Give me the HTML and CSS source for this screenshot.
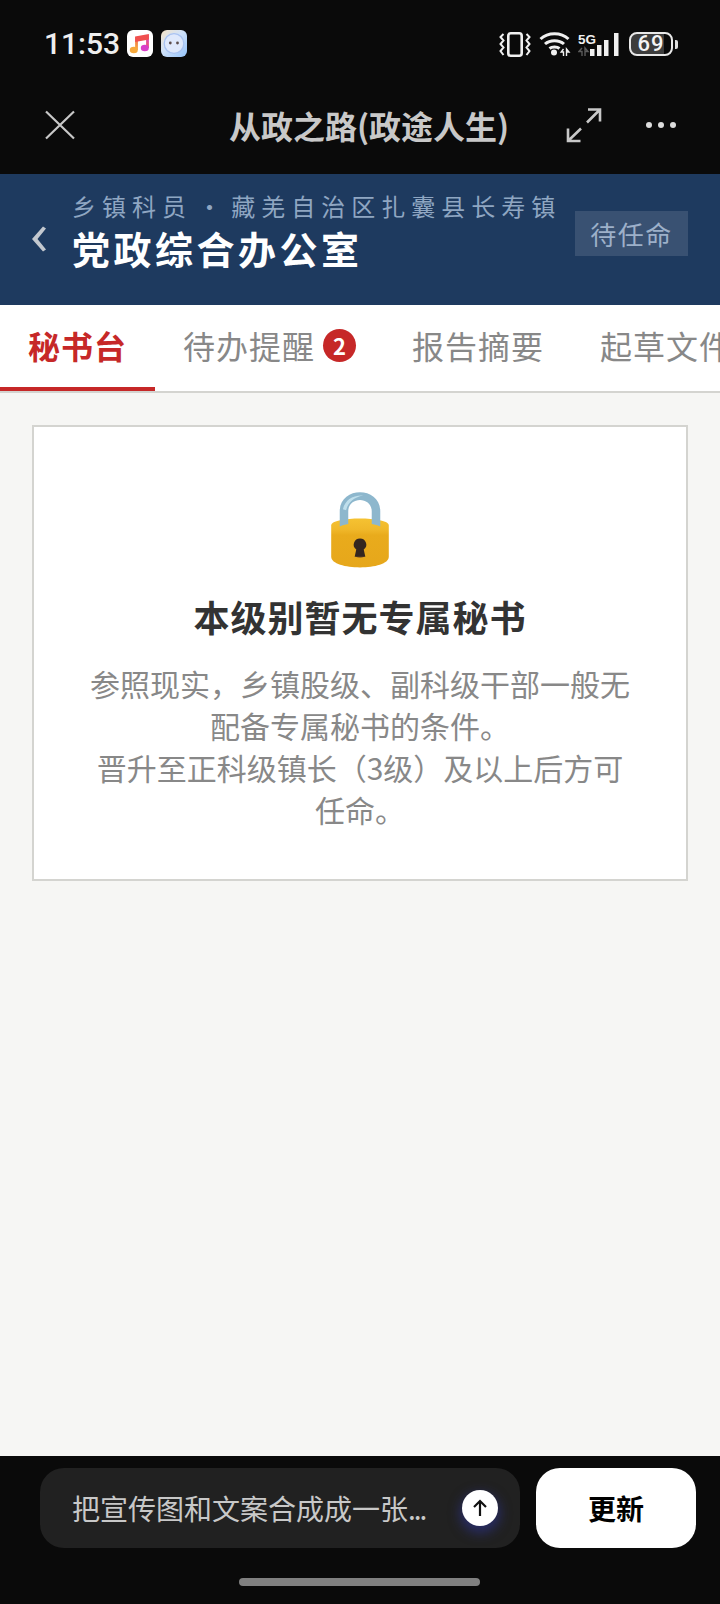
FILE: index.html
```html
<!DOCTYPE html>
<html lang="zh-CN">
<head>
<meta charset="utf-8">
<title>从政之路</title>
<link rel="stylesheet" href="styles.css">
</head>
<body>
<div class="page">
  <div class="statusbar">
    <div class="status-left">
      <span class="clock">11:53</span>
      <svg class="app-icon" width="26" height="27" viewBox="0 0 26 27">
        <defs>
          <linearGradient id="noteGrad" x1="0" y1="1" x2="1" y2="0">
            <stop offset="0" stop-color="#f7b03a"/><stop offset=".5" stop-color="#f0604f"/><stop offset="1" stop-color="#d93fc8"/>
          </linearGradient>
        </defs>
        <rect width="26" height="27" rx="6" fill="#fff"/>
        <path d="M9.500 20V8.500L20.500 6.500V18" fill="none" stroke="url(#noteGrad)" stroke-width="2.800"/>
        <path d="M8.100 6.500L21.900 4V9.500L8.100 12Z" fill="#f0504f"/>
        <ellipse cx="6.800" cy="20" rx="4" ry="3.300" fill="#f6a93b"/>
        <ellipse cx="17.800" cy="18" rx="4" ry="3.300" fill="#d93fc8"/>
      </svg>
      <svg class="app-icon" width="26" height="27" viewBox="0 0 26 27">
        <defs>
          <linearGradient id="botGrad" x1="0" y1="0" x2="1" y2="1">
            <stop offset="0" stop-color="#f6e4c6"/><stop offset=".45" stop-color="#cfe2fb"/><stop offset="1" stop-color="#95c4fb"/>
          </linearGradient>
        </defs>
        <rect width="26" height="27" rx="6" fill="url(#botGrad)"/>
        <circle cx="13" cy="13.500" r="9.800" fill="#dfe9fc" stroke="#a9c3f2" stroke-width="1.300"/>
        <circle cx="9.300" cy="13" r="1.400" fill="#5c4d4c"/>
        <circle cx="16.500" cy="13" r="1.400" fill="#5c4d4c"/>
      </svg>
    </div>
    <div class="status-right">
      <svg class="vibrate" width="32" height="25" viewBox="0 0 32 25" fill="none" stroke="#f0f0f0" stroke-width="2.600">
        <rect x="9.300" y="1.300" width="13.400" height="22.400" rx="2.500"/>
        <path d="M4.500 2L1.500 5L4.500 8.500L1.500 12L4.500 15.500L1.500 19L4.500 23M27.500 2L30.500 5L27.500 8.500L30.500 12L27.500 15.500L30.500 19L27.500 23" stroke-width="2"/>
      </svg>
      <svg class="wifi" width="32" height="25" viewBox="0 0 32 25" fill="none" stroke="#f0f0f0" stroke-width="3">
        <path d="M1.500 7C9 0 22 0 29.500 7M6 12C11 7.500 20 7.500 25 12M10.500 16.500C13 14.500 18 14.500 20.500 16.500"/>
        <circle cx="15" cy="20.500" r="3" fill="#f0f0f0" stroke="none"/>
        <path d="M24.500 17L22.200 20H24.500V24M27.500 24V17L30 20H27.500" stroke-width="1.400"/>
      </svg>
      <svg class="signal" width="42" height="25" viewBox="0 0 42 25">
        <text class="five-g" x="0" y="12">5G</text>
        <path d="M4 16L1 19.500H4V24M7 24V16L10 19.500H7" fill="none" stroke="#5a5a5a" stroke-width="1.400"/>
        <rect x="12" y="17" width="4.500" height="7" fill="#f0f0f0"/>
        <rect x="19" y="13" width="4.500" height="11" fill="#f0f0f0"/>
        <rect x="26" y="8" width="4.500" height="16" fill="#f0f0f0"/>
        <rect x="36" y="1" width="4.500" height="23" fill="#f0f0f0"/>
      </svg>
      <div class="battery">
        <div class="battery-body">69</div>
        <div class="battery-tip"></div>
      </div>
    </div>
  </div>

  <div class="navbar">
    <svg class="nav-close" width="30" height="30" viewBox="0 0 30 30" fill="none" stroke="#c8c8c8" stroke-width="2.200">
      <path d="M1 1.500L29 28.500M29 1.500L1 28.500"/>
    </svg>
    <div class="nav-title">从政之路(政途人生)</div>
    <svg class="nav-expand" width="36" height="36" viewBox="0 0 36 36" fill="none" stroke="#c8c8c8" stroke-width="2.600">
      <path d="M22 2.500H34V14.500M34 2.500L21 15.500M2 21.500V34H14.500M2 34L15 21.500"/>
    </svg>
    <svg class="nav-more" width="32" height="8" viewBox="0 0 32 8" fill="#dcdcdc">
      <circle cx="4" cy="4" r="3"/><circle cx="16" cy="4" r="3"/><circle cx="28" cy="4" r="3"/>
    </svg>
  </div>

  <header class="hero">
    <svg class="hero-back" width="16" height="26" viewBox="0 0 16 26" fill="#c3c8cf">
      <path d="M12 0.500L15 2.500L6.500 13L15 23.500L12 25.500L1 13Z"/>
    </svg>
    <div class="hero-text">
      <div class="hero-sub">乡镇科员<span class="hero-sep"> · </span>藏羌自治区扎囊县长寿镇</div>
      <div class="hero-title">党政综合办公室</div>
    </div>
    <div class="hero-tag">待任命</div>
  </header>

  <nav class="tabs">
    <div class="tab tab-active">秘书台</div>
    <div class="tab">待办提醒<span class="tab-badge">2</span></div>
    <div class="tab">报告摘要</div>
    <div class="tab">起草文件</div>
  </nav>

  <main class="content">
    <section class="card">
      <svg class="lock" width="64" height="79" viewBox="0 0 60 78" preserveAspectRatio="none">
        <defs>
          <linearGradient id="lockBody" x1="0" y1="0" x2="0" y2="1">
            <stop offset="0" stop-color="#f5c232"/><stop offset=".22" stop-color="#f0b82a"/><stop offset=".34" stop-color="#e9ab1c"/><stop offset="1" stop-color="#e6a71b"/>
          </linearGradient>
        </defs>
        <path d="M3 35C3 26 57 26 57 35V66C57 80 3 80 3 66Z" fill="url(#lockBody)"/>
        <path d="M11 36V21C11 -4 49 -4 49 21V36C47 35 44 34 41 33.500V21C41 6 19 6 19 21V33.500C16 34 13 35 11 36Z" fill="#8db7cd"/>
        <path d="M14 19C16 10 23 5 33 5.500C24 7.500 19 12 17 20Z" fill="#bfdfec"/>
        <path d="M26 66L28.500 59H31.500L34 66Q30 68 26 66Z" fill="#8f5f1e"/>
        <path d="M30 48a6 6 0 0 1 3.500 10.800L35 66H25L26.500 58.800A6 6 0 0 1 30 48Z" fill="#34261f"/>
      </svg>
      <h2 class="card-title">本级别暂无专属秘书</h2>
      <p class="card-text">参照现实，乡镇股级、副科级干部一般无配备专属秘书的条件。<br>晋升至正科级镇长（3级）及以上后方可任命。</p>
    </section>
  </main>

  <footer class="footer">
    <div class="footer-row">
      <div class="prompt">
        <span class="prompt-text">把宣传图和文案合成成一张<span class="prompt-dots">...</span></span>
        <span class="prompt-send">
          <svg width="16" height="18" viewBox="0 0 16 18" fill="none" stroke="#111" stroke-width="2.200">
            <path d="M8 17V2M2 8L8 2L14 8"/>
          </svg>
        </span>
      </div>
      <div class="update">更新</div>
    </div>
    <div class="home-bar"></div>
  </footer>
</div>
</body>
</html>
```

FILE: styles.css
```css
* { box-sizing: border-box; }
html, body { margin: 0; padding: 0; }
body {
  font-family: "Noto Sans CJK SC", "Noto Sans", sans-serif;
  background: #0a0a0a;
}
.page {
  width: 720px;
  height: 1604px;
  display: flex;
  flex-direction: column;
  overflow: hidden;
}

/* status bar */
.statusbar {
  height: 75px;
  background: #0a0a0a;
  display: flex;
  justify-content: space-between;
  padding: 30px 42px 0 44px;
}
.status-left { display: flex; align-items: flex-start; }
.clock {
  font-family: Roboto, sans-serif;
  font-weight: 500;
  font-size: 30px;
  line-height: 27px;
  color: #eee;
  margin-right: 7px;
}
.app-icon { margin-right: 8px; }
.status-right { display: flex; align-items: flex-start; gap: 8px; }
.vibrate { margin-top: 2px; }
.wifi { margin-top: 2px; }
.signal { margin-top: 2px; margin-left: -1px; }
.five-g {
  font-family: "Liberation Sans", sans-serif;
  font-weight: 700;
  font-size: 13.500px;
  fill: #f0f0f0;
}
.battery { display: flex; align-items: center; margin-top: 2px; margin-left: 1px; }
.battery-body {
  width: 44px;
  height: 24px;
  border: 2px solid #e8e8e8;
  border-radius: 8px;
  background: linear-gradient(to right, #3d3d3d 82%, #0a0a0a 82%);
  color: #f4f4f4;
  font-family: Roboto, sans-serif;
  font-weight: 500;
  font-size: 22px;
  line-height: 20px;
  letter-spacing: 1px;
  text-align: center;
}
.battery-tip {
  width: 3px;
  height: 9px;
  margin-left: 2px;
  background: #ddd;
  border-radius: 0 2px 2px 0;
}

/* nav bar */
.navbar {
  height: 99px;
  background: #0a0a0a;
  display: flex;
  align-items: center;
  padding: 0 42px 0 45px;
}
.nav-close { flex: none; }
.nav-title {
  flex: none;
  margin-left: 154px;
  width: 278px;
  font-size: 32px;
  font-weight: 700;
  line-height: 44px;
  color: #c8c8c8;
  white-space: nowrap;
}
.nav-expand { flex: none; margin-left: 59px; }
.nav-more { flex: none; margin-left: 43px; }

/* hero */
.hero {
  height: 131px;
  background: #1e3a5f;
  display: flex;
  align-items: flex-start;
  padding: 15px 32px 0 31px;
}
.hero-back { flex: none; margin-top: 37px; }
.hero-text { flex: 1; margin-left: 25px; min-width: 0; }
.hero-sub {
  font-size: 24px;
  line-height: 34px;
  letter-spacing: 6px;
  color: #8fa6c2;
  white-space: nowrap;
}
.hero-sep { letter-spacing: 0; padding-right: 4.500px; }
.hero-title {
  font-size: 38px;
  font-weight: 700;
  line-height: 50px;
  letter-spacing: 3.500px;
  color: #fff;
  white-space: nowrap;
}
.hero-tag {
  flex: none;
  margin-top: 22px;
  width: 113px;
  height: 45px;
  background: rgba(255, 255, 255, .12);
  color: #9db0c9;
  font-size: 26px;
  line-height: 45px;
  letter-spacing: 1.500px;
  text-align: center;
}

/* tabs */
.tabs {
  height: 88px;
  background: #fff;
  border-bottom: 2px solid #d4d4d0;
  display: flex;
  overflow: hidden;
}
.tab {
  flex: none;
  height: 86px;
  padding: 0 28px 6px;
  display: flex;
  align-items: center;
  font-size: 32px;
  letter-spacing: 1px;
  color: #888;
  white-space: nowrap;
}
.tab-active {
  color: #c62828;
  font-weight: 700;
  border-bottom: 4px solid #c62828;
  padding-bottom: 2px;
}
.tab-badge {
  width: 33px;
  height: 33px;
  margin-left: 8px;
  border-radius: 50%;
  background: #c62828;
  color: #fff;
  font-size: 22px;
  font-weight: 700;
  letter-spacing: 0;
  line-height: 33px;
  text-align: center;
}

/* content */
.content {
  flex: 1;
  background: #f6f6f4;
  padding: 32px 32px 0;
}
.card {
  height: 456px;
  background: #fff;
  border: 2px solid #d4d4d0;
  padding: 63px 48px 0;
  text-align: center;
}
.lock { display: block; margin: 0 auto; }
.card-title {
  margin: 22px 0 0;
  font-size: 36px;
  font-weight: 700;
  line-height: 50px;
  letter-spacing: 1px;
  color: #333;
}
.card-text {
  margin: 21px 0 0;
  font-size: 30px;
  line-height: 42px;
  color: #888;
}

/* footer */
.footer {
  height: 148px;
  background: #0a0a0a;
  padding: 12px 24px 0 40px;
}
.footer-row { display: flex; gap: 16px; }
.prompt {
  width: 480px;
  height: 80px;
  border-radius: 24px;
  background: #212121;
  display: flex;
  align-items: center;
  padding: 0 22px 0 32px;
  justify-content: space-between;
}
.prompt-text {
  font-size: 28px;
  color: #c8c8c8;
  white-space: nowrap;
}
.prompt-dots { letter-spacing: -2px; }
.prompt-send {
  width: 36px;
  height: 36px;
  border-radius: 50%;
  background: #fff;
  display: flex;
  align-items: center;
  justify-content: center;
  box-shadow: 0 5px 12px 2px rgba(48, 56, 170, .5);
}
.update {
  width: 160px;
  height: 80px;
  border-radius: 24px;
  background: #fff;
  color: #000;
  font-size: 28px;
  font-weight: 700;
  line-height: 80px;
  text-align: center;
}
.home-bar {
  width: 241px;
  height: 8px;
  margin: 30px 0 0 199px;
  border-radius: 4px;
  background: #808080;
}
```
